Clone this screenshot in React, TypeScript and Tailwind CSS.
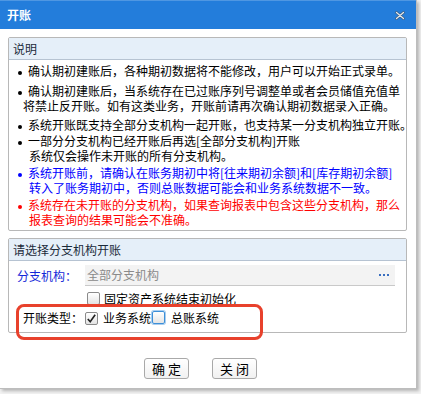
import React from 'react';

const font = { fontFamily: '"Noto Sans CJK SC", "Noto Sans", sans-serif' };

const notes: { lines: string[]; color: string; dot: string; indent: string; mt: string }[] = [
  {
    lines: ['确认期初建账后，各种期初数据将不能修改，用户可以开始正式录单。'],
    color: 'text-black',
    dot: 'bg-black',
    indent: 'pl-[20px] -indent-[11px]',
    mt: 'mt-0',
  },
  {
    lines: ['确认期初建账后，当系统存在已过账序列号调整单或者会员储值充值单', '将禁止反开账。如有这类业务，开账前请再次确认期初数据录入正确。'],
    color: 'text-black',
    dot: 'bg-black',
    indent: 'pl-[14px] -indent-[5px]',
    mt: 'mt-[5px]',
  },
  {
    lines: ['系统开账既支持全部分支机构一起开账，也支持某一分支机构独立开账。'],
    color: 'text-black',
    dot: 'bg-black',
    indent: 'pl-[20px] -indent-[11px]',
    mt: 'mt-[4px]',
  },
  {
    lines: ['一部分分支机构已经开账后再选[全部分支机构]开账', '系统仅会操作未开账的所有分支机构。'],
    color: 'text-black',
    dot: 'bg-black',
    indent: 'pl-[20px] -indent-[11px]',
    mt: 'mt-[1px]',
  },
  {
    lines: ['系统开账前，请确认在账务期初中将[往来期初余额]和[库存期初余额]', '转入了账务期初中，否则总账数据可能会和业务系统数据不一致。'],
    color: 'text-[#0000ff]',
    dot: 'bg-[#0000ff]',
    indent: 'pl-[20px] -indent-[11px]',
    mt: 'mt-[2px]',
  },
  {
    lines: ['系统存在未开账的分支机构，如果查询报表中包含这些分支机构，那么', '报表查询的结果可能会不准确。'],
    color: 'text-[#ff0000]',
    dot: 'bg-[#ff0000]',
    indent: 'pl-[20px] -indent-[11px]',
    mt: 'mt-[2px]',
  },
];

const Checkbox: React.FC<{ checked?: boolean; focus?: boolean }> = ({ checked, focus }) => (
  <span
    className={
      'inline-flex items-center justify-center w-[13px] h-[13px] rounded-[2px] bg-gradient-to-b from-white to-[#e4e4e4] ' +
      (focus ? 'border border-[#3c8fd8] shadow-[0_0_0_1px_#a9cdef]' : 'border border-[#8a8a8a]')
    }
  >
    {checked && (
      <svg viewBox="0 0 12 12" className="w-[11px] h-[11px]">
        <path d="M2 6.5 L4.6 9.5 L10 2" fill="none" stroke="#222" strokeWidth="1.8" />
      </svg>
    )}
  </span>
);

const PanelHeader: React.FC<{ title: string }> = ({ title }) => (
  <div className="h-[22px] flex items-center pl-[4px] bg-[#e5eff9] border-b border-[#b6c3d2] text-[12px] text-[#1b2a3a] leading-none">
    {title}
  </div>
);

export default function App() {
  return (
    <div className="w-[421px] h-[394px] bg-[#f2f2f2] overflow-hidden" style={font}>
      <div className="relative w-[417px] h-[389px] bg-white border-r border-b border-[#bdbdbd] shadow-[2px_2px_3px_rgba(0,0,0,0.25)]">
        {/* title bar */}
        <div className="h-[29px] bg-[#237ddb] border-t border-[#4f97e2] flex items-center justify-between pl-[7px] pr-[11px]">
          <span className="text-white text-[12px] font-bold leading-none">开账</span>
          <svg viewBox="0 0 10 9" className="w-[10px] h-[9px]">
            <path d="M1.5 1.5 L8.5 7.5 M8.5 1.5 L1.5 7.5" stroke="#3d5a78" strokeWidth="2.6" strokeLinecap="round" />
            <path d="M1.5 1.5 L8.5 7.5 M8.5 1.5 L1.5 7.5" stroke="#dfe7ef" strokeWidth="1.3" strokeLinecap="round" />
          </svg>
        </div>

        <div className="pl-[8px] pr-[9px] pt-[8px]">
          {/* 说明 */}
          <div className="border border-[#b8b8b8] rounded-[2px]">
            <PanelHeader title="说明" />
            <div className="pt-[3px] pb-[3px] text-[12px] leading-[15px] whitespace-nowrap">
              {notes.map((n, i) => (
                <div key={i} className={n.color + ' ' + n.mt + ' ' + n.indent}>
                  <span className={'inline-block w-[4px] h-[4px] rounded-full align-middle mr-[6px] indent-0 ' + n.dot} />
                  {n.lines.map((l, j) => (
                    <React.Fragment key={j}>
                      {j > 0 && <br />}
                      {l}
                    </React.Fragment>
                  ))}
                </div>
              ))}
            </div>
          </div>

          {/* 请选择分支机构开账 */}
          <div className="mt-[7px] border border-[#b8b8b8] rounded-[2px] h-[95px]">
            <PanelHeader title="请选择分支机构开账" />
            <div className="flex items-center mt-[4px] h-[21px] text-[12px]">
              <span className="w-[76px] pl-[8px] text-[#1428d8]">分支机构：</span>
              <div className="w-[310px] h-[21px] bg-[#f3f3f3] border-b border-[#c9c9c9] flex items-center justify-between pl-[2px] pr-[6px]">
                <span className="text-[#8a8a8a]">全部分支机构</span>
                <span className="flex gap-[2px]">
                  <span className="w-[2px] h-[2px] bg-[#3a6fc0]" />
                  <span className="w-[2px] h-[2px] bg-[#3a6fc0]" />
                  <span className="w-[2px] h-[2px] bg-[#3a6fc0]" />
                </span>
              </div>
            </div>
            <div className="flex items-center mt-[6px] pl-[78px] gap-[4px] text-[12px] leading-none">
              <Checkbox />
              <span>固定资产系统结束初始化</span>
            </div>
            <div className="flex items-center mt-[6px] pl-[14px] text-[12px] leading-none">
              <span className="w-[62px]">开账类型：</span>
              <Checkbox checked />
              <span className="ml-[5px]">业务系统</span>
              <span className="ml-[1px]">
                <Checkbox focus />
              </span>
              <span className="ml-[6px]">总账系统</span>
            </div>
          </div>

          {/* buttons */}
          <div className="flex justify-center gap-[23px] mt-[25px] pr-[14px]">
            {['确 定', '关 闭'].map((b) => (
              <button
                key={b}
                className="w-[45px] h-[21px] border border-[#a9a9a9] rounded-[3px] bg-gradient-to-b from-white to-[#f1f1f1] text-[13px] leading-none text-black whitespace-pre"
              >
                {b}
              </button>
            ))}
          </div>
        </div>

        {/* annotation */}
        <div className="absolute left-[16px] top-[304px] w-[247px] h-[36px] border-[3px] border-[#e8412c] rounded-[8px] pointer-events-none" />
      </div>
    </div>
  );
}
